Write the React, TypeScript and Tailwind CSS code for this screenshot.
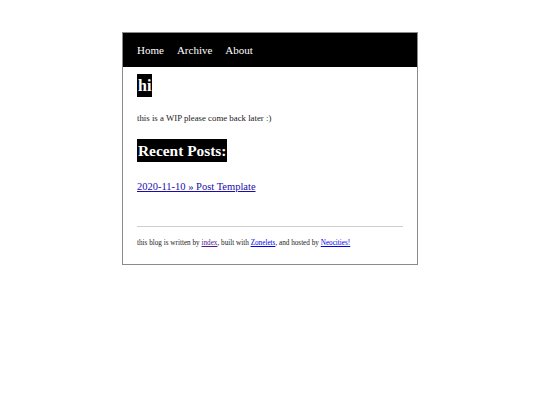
export default function App() {
  return (
    <div className="min-h-screen w-full bg-white pt-8 font-['Liberation_Serif','Times_New_Roman',serif]">
      <div className="ml-[122px] w-[296px] border border-[#8a8a8a]">
        {/* nav */}
        <nav className="flex h-[34px] items-center gap-[13px] bg-black px-[14px] text-[11px] text-white">
          <a>Home</a>
          <a>Archive</a>
          <a>About</a>
        </nav>

        <div className="px-[14px] pb-[16px] pt-[7px]">
          <h1 className="w-fit bg-black px-px text-[16px] font-bold leading-[23px] text-white">hi</h1>
          <p className="mt-[15px] text-[8.8px] leading-[12px] text-[#222]">this is a WIP please come back later :)</p>
          <h2 className="mt-[15px] w-fit bg-black px-px text-[15.4px] font-bold leading-[23px] text-white">
            Recent Posts:
          </h2>
          <div className="mt-[18px] text-[10.5px] leading-[14px]">
            <a href="#" className="text-[#1a0dab] underline">
              2020-11-10 » Post Template
            </a>
          </div>
          <hr className="mt-[32px] border-t border-[#cfcfcf]" />
          <p className="mt-[11px] text-[7.2px] leading-[10px] text-[#222]">
            this blog is written by{" "}
            <a href="#" className="text-[#551a8b] underline">
              index
            </a>
            , built with{" "}
            <a href="#" className="text-[#0000ee] underline">
              Zonelets
            </a>
            , and hosted by{" "}
            <a href="#" className="text-[#0000ee] underline">
              Neocities!
            </a>
          </p>
        </div>
      </div>
    </div>
  );
}
